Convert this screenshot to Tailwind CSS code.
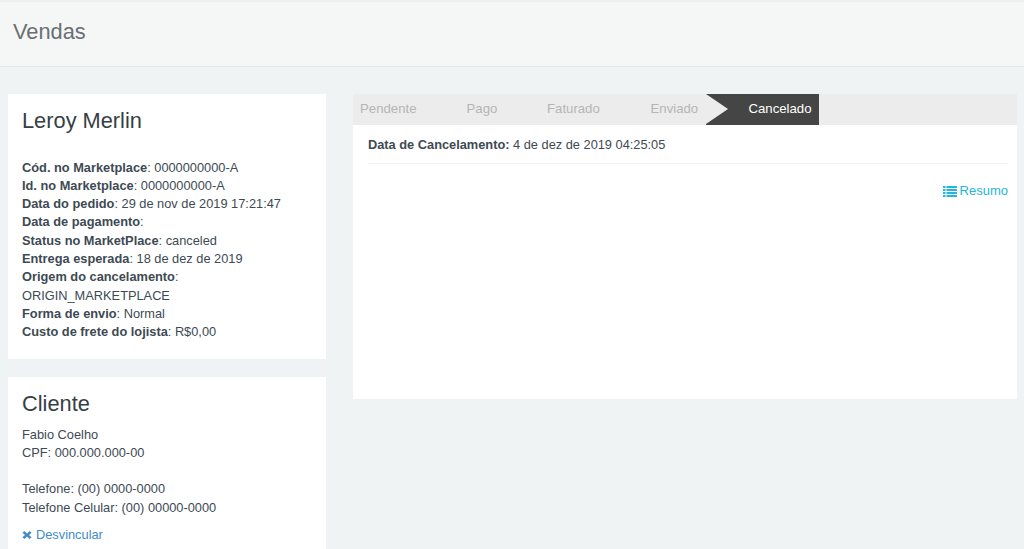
<!DOCTYPE html>
<html><head><meta charset="utf-8"><script src="https://cdn.jsdelivr.net/npm/@tailwindcss/browser@4"></script></head>
<body class="bg-[#eff3f4] font-['Liberation_Sans',Arial,sans-serif] text-[12.8px] leading-[18.3px] text-[#3d4a54] h-[549px] overflow-hidden">
<header class="h-[67px] bg-[#f5f7f7] border-t-2 border-t-[#eef0f0] border-b border-b-[#e3e8eb] pl-[13px] pt-[17px]">
<h1 class="text-[21.8px] leading-[26px] text-[#6a6f73]">Vendas</h1>
</header>
<main class="flex items-start pt-[27px] pl-[8px] pr-[7px]">
<div class="w-[318px] shrink-0 flex flex-col gap-[18px]">
<section class="bg-white h-[265px] px-[14px] pt-[14px]">
<h2 class="text-[21.8px] leading-[26px] text-[#363f44] mb-[24.5px]">Leroy Merlin</h2>
<p><b>Cód. no Marketplace</b>: 0000000000-A</p>
<p><b>Id. no Marketplace</b>: 0000000000-A</p>
<p><b>Data do pedido</b>: 29 de nov de 2019 17:21:47</p>
<p><b>Data de pagamento</b>:</p>
<p><b>Status no MarketPlace</b>: canceled</p>
<p><b>Entrega esperada</b>: 18 de dez de 2019</p>
<p><b>Origem do cancelamento</b>:</p>
<p>ORIGIN_MARKETPLACE</p>
<p><b>Forma de envio</b>: Normal</p>
<p><b>Custo de frete do lojista</b>: R$0,00</p>
</section>
<section class="bg-white h-[180px] px-[14px] pt-[14px]">
<h2 class="text-[21.8px] leading-[26px] text-[#363f44] mb-[8.6px]">Cliente</h2>
<p>Fabio Coelho</p>
<p>CPF: 000.000.000-00</p>
<p class="h-[18.3px]"></p>
<p>Telefone: (00) 0000-0000</p>
<p>Telefone Celular: (00) 00000-0000</p>
<a class="mt-[9px] flex items-center gap-[4px] text-[#428bca]"><svg width="10" height="10" viewBox="0 0 10 10"><path d="M2.4.9 5 3.4 7.6.9 9.6 2.8 7 5 9.6 7.2 7.6 9.1 5 6.6 2.4 9.1.4 7.2 3 5 .4 2.8Z" fill="#428bca"/></svg>Desvincular</a>
</section>
</div>
<section class="ml-[27px] flex-1 bg-white h-[305px]">
<nav class="h-[31px] bg-[#ececec] flex items-center text-[13.2px] text-[#b5b5b5]">
<span class="w-[106.5px] pl-[7px]">Pendente</span>
<span class="w-[80.5px] pl-[7px]">Pago</span>
<span class="w-[103.5px] pl-[7px]">Faturado</span>
<span class="w-[62.5px] pl-[7px]">Enviado</span>
<div class="relative w-[112.5px] h-full bg-[#454545] text-white flex items-center justify-end pr-[7px]">Cancelado<span class="absolute left-0 top-0 w-0 h-0 border-y-[15.5px] border-y-transparent border-l-[22px] border-l-[#ececec]"></span></div>
</nav>
<div class="mx-[15px] mr-[9px] pt-[11px] h-[39px] border-b border-b-[#f1f3f4]"><b>Data de Cancelamento:</b> 4 de dez de 2019 04:25:05</div>
<a class="mt-[18px] mr-[9px] flex items-center justify-end gap-[3px] text-[13px] text-[#23b7d9]"><svg width="14" height="12" viewBox="0 0 14 12" fill="#23b7d9"><rect x="0" y="1" width="2.5" height="2"/><rect x="3.5" y="1" width="10.5" height="2"/><rect x="0" y="4" width="2.5" height="2"/><rect x="3.5" y="4" width="10.5" height="2"/><rect x="0" y="7" width="2.5" height="2"/><rect x="3.5" y="7" width="10.5" height="2"/><rect x="0" y="10" width="2.5" height="2"/><rect x="3.5" y="10" width="10.5" height="2"/></svg>Resumo</a>
</section>
</main>
</body></html>
